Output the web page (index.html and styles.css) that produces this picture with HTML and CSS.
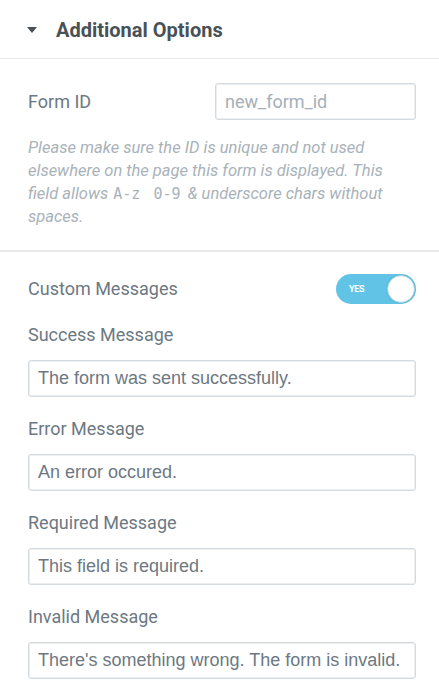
FILE: index.html
```html
<!DOCTYPE html>
<html>
<head>
<meta charset="utf-8">
<link rel="stylesheet" href="styles.css">
</head>
<body>
<div class="panel">
  <div class="section-head">
    <span class="caret"></span>
    <span class="section-title">Additional Options</span>
  </div>
  <div class="section section-id">
    <div class="row">
      <label class="label">Form ID</label>
      <div class="input input-small placeholder">new_form_id</div>
    </div>
    <p class="desc">Please make sure the ID is unique and not used elsewhere on the page this form is displayed. This field allows <code>A-z 0-9</code> &amp; underscore chars without spaces.</p>
  </div>
  <div class="section section-msgs">
    <div class="row toggle-row">
      <label class="label">Custom Messages</label>
      <div class="toggle"><span class="toggle-text">YES</span><span class="knob"></span></div>
    </div>
    <div class="field">
      <label class="label">Success Message</label>
      <div class="input">The form was sent successfully.</div>
    </div>
    <div class="field">
      <label class="label">Error Message</label>
      <div class="input">An error occured.</div>
    </div>
    <div class="field">
      <label class="label">Required Message</label>
      <div class="input">This field is required.</div>
    </div>
    <div class="field">
      <label class="label">Invalid Message</label>
      <div class="input">There's something wrong. The form is invalid.</div>
    </div>
  </div>
</div>
</body>
</html>
```
FILE: styles.css
```css
html, body {
  margin: 0;
  padding: 0;
  background: #ffffff;
}
body {
  font-family: Roboto, "Liberation Sans", sans-serif;
  color: #6d7882;
}
.panel {
  width: 439px;
}
.section-head {
  height: 58px;
  border-bottom: 1px solid #e6e9ec;
  display: flex;
  align-items: center;
  padding-left: 27px;
  box-sizing: content-box;
}
.caret {
  width: 0;
  height: 0;
  border-left: 5.5px solid transparent;
  border-right: 5.5px solid transparent;
  border-top: 6px solid #495157;
  margin-right: 19px;
  margin-top: 1px;
}
.section-title {
  font-weight: 700;
  font-size: 20px;
  color: #495157;
  margin-top: 1px;
}
.section {
  padding: 0 23px 0 28px;
}
.section-id {
  padding-top: 24px;
  padding-bottom: 22px;
  border-bottom: 2px solid #e8eaed;
}
.row {
  display: flex;
  align-items: center;
  justify-content: space-between;
}
.label {
  font-size: 18px;
  line-height: 20px;
  color: #6d7882;
  display: block;
}
.input {
  height: 37px;
  box-sizing: border-box;
  border: 1px solid #d5dadf;
  border-radius: 3px;
  box-shadow: inset 0 0 0 1px #eceef0;
  padding: 0 9px;
  display: flex;
  align-items: center;
  font-family: "Liberation Sans", Arial, sans-serif;
  font-size: 18px;
  color: #6d7882;
  white-space: nowrap;
}
.input-small {
  width: 201px;
  font-family: Roboto, sans-serif;
}
.placeholder {
  color: #a4afb7;
}
.desc {
  margin: 16px 0 0;
  font-style: italic;
  font-size: 16.5px;
  line-height: 23px;
  color: #a9b2b9;
}
.desc code {
  font-family: "DejaVu Sans Mono", monospace;
  font-style: normal;
  font-size: 15px;
  line-height: 1;
  word-spacing: 4px;
  margin: 0 3px 0 1px;
}
.section-msgs {
  padding-top: 22px;
}
.toggle-row {
  height: 30px;
  margin-bottom: 21px;
}
.toggle {
  width: 80px;
  height: 30px;
  border-radius: 15px;
  background: #61c4e6;
  display: flex;
  align-items: center;
  justify-content: space-between;
  box-sizing: border-box;
  padding-left: 13px;
  padding-right: 1px;
}
.toggle-text {
  color: #ffffff;
  font-size: 9px;
  font-weight: 700;
  letter-spacing: -0.3px;
}
.knob {
  width: 28px;
  height: 28px;
  border-radius: 50%;
  background: #ffffff;
  box-sizing: border-box;
  border: 1px solid #9fcfe0;
  box-shadow: 0 0 2px rgba(0,0,0,0.15);
}
.field {
  margin-bottom: 22px;
}
.field .label {
  margin-bottom: 15px;
}
```
